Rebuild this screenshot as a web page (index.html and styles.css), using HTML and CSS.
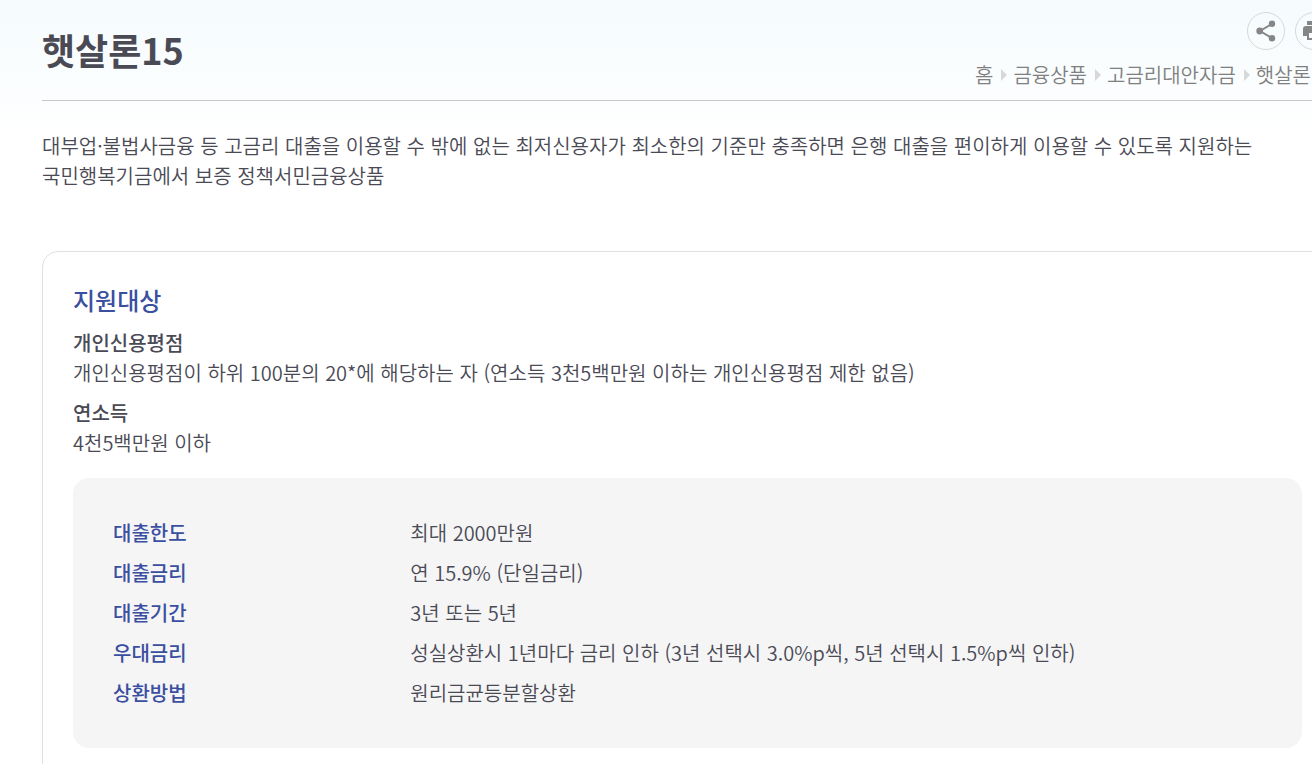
FILE: index.html
```html
<!DOCTYPE html>
<html lang="ko">
<head>
<meta charset="utf-8">
<title>햇살론15</title>
<link rel="stylesheet" href="styles.css">
</head>
<body>
<main class="page">
  <header class="page-header">
    <h1 class="page-title">햇살론15</h1>
    <div class="header-side">
      <div class="tools">
        <button class="tool" type="button" aria-label="공유">
          <svg width="20" height="22" viewBox="0 0 20 22" fill="#868686"><path d="M16.500 3.500L4 11l12.500 7.500" fill="none" stroke="#868686" stroke-width="2"/><circle cx="16" cy="3.700" r="3.200"/><circle cx="3.700" cy="11" r="3.400"/><circle cx="16" cy="18.300" r="3.200"/></svg>
        </button>
        <button class="tool" type="button" aria-label="인쇄">
          <svg width="22" height="20" viewBox="0 0 22 20" fill="#868686"><path d="M4 0h14v4H4zM3 5h16a3 3 0 0 1 3 3v7h-4v4H4v-4H0V8a3 3 0 0 1 3-3zM6 12v5h10v-5z" fill-rule="evenodd"/></svg>
        </button>
      </div>
      <nav class="crumbs" aria-label="위치">
        <a href="#">홈</a><a href="#">금융상품</a><a href="#">고금리대안자금</a><a href="#">햇살론</a>
      </nav>
    </div>
  </header>
  <p class="intro">대부업·불법사금융 등 고금리 대출을 이용할 수 밖에 없는 최저신용자가 최소한의 기준만 충족하면 은행 대출을 편이하게 이용할 수 있도록 지원하는<br>국민행복기금에서 보증 정책서민금융상품</p>
  <section class="card">
    <h2 class="card-title">지원대상</h2>
    <h3 class="label">개인신용평점</h3>
    <p class="text">개인신용평점이 하위 100분의 20*에 해당하는 자 (연소득 3천5백만원 이하는 개인신용평점 제한 없음)</p>
    <h3 class="label">연소득</h3>
    <p class="text">4천5백만원 이하</p>
    <dl class="terms">
      <dt>대출한도</dt><dd>최대 2000만원</dd>
      <dt>대출금리</dt><dd>연 15.9% (단일금리)</dd>
      <dt>대출기간</dt><dd>3년 또는 5년</dd>
      <dt>우대금리</dt><dd>성실상환시 1년마다 금리 인하 (3년 선택시 3.0%p씩, 5년 선택시 1.5%p씩 인하)</dd>
      <dt>상환방법</dt><dd>원리금균등분할상환</dd>
    </dl>
  </section>
</main>
</body>
</html>
```
FILE: styles.css
```css
* { box-sizing: border-box; margin: 0; padding: 0; }
html { overflow: hidden; }
body {
  color: #4a4a55;
  background: #fff linear-gradient(#f5fbfd, #fff 140px) no-repeat;
  font: 350 20px/30px "Noto Sans CJK KR", sans-serif;
  word-break: keep-all;
}
.page { margin: 0 -21px 0 42px; }
.page-header {
  display: flex;
  justify-content: space-between;
  height: 101px;
  border-bottom: 1px solid #c8c8cc;
}
.page-title { padding-top: 23px; font-size: 36px; line-height: 52px; font-weight: 700; }
.header-side { padding-top: 12px; }
.tools { display: flex; justify-content: flex-end; gap: 10px; }
.tool {
  display: grid;
  place-items: center;
  width: 38px;
  height: 38px;
  border: 1px solid #d8d8da;
  border-radius: 50%;
  background: transparent;
}
.crumbs { display: flex; margin-top: 10px; padding-right: 22px; white-space: nowrap; }
.crumbs a { display: flex; align-items: center; color: #808080; text-decoration: none; }
.crumbs a + a::before {
  content: "";
  margin: 0 6px 0 8px;
  border: solid transparent;
  border-width: 6px 0 6px 6px;
  border-left-color: #d8d8da;
}
.intro { margin-top: 30px; }
.card {
  margin-top: 60px;
  padding: 30px;
  border: 1px solid #e0e0e2;
  border-radius: 16px;
  background: #fff;
}
.card-title { color: #3a4fa0; font-size: 24px; line-height: 36px; font-weight: 500; margin-bottom: 10px; }
.label { font-size: 20px; font-weight: 500; }
.text + .label { margin-top: 10px; }
.terms {
  display: grid;
  grid-template-columns: 25% 1fr;
  gap: 10px;
  margin-top: 20px;
  padding: 40px;
  border-radius: 16px;
  background: #f5f5f5;
}
.terms dt { color: #3a4fa0; font-weight: 500; }
```
